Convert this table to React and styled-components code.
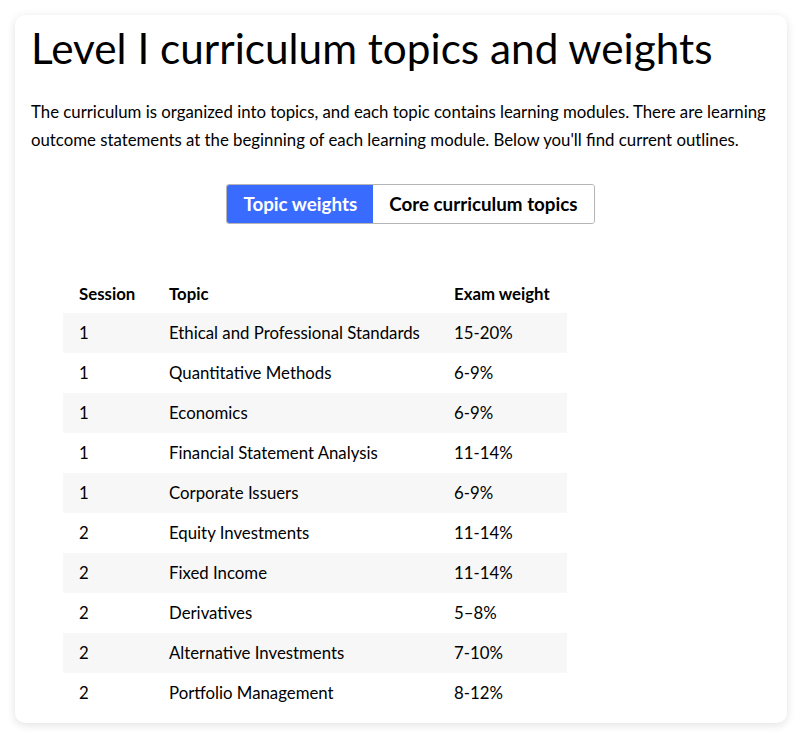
import React from "react";
import styled, { createGlobalStyle } from "styled-components";

const Global = createGlobalStyle`
  html, body { margin: 0; padding: 0; background: #ffffff; }
  body { font-family: Lato, "Noto Sans", sans-serif; color: #000; }
  * { box-sizing: border-box; }
`;

const Page = styled.div`
  padding: 15px;
`;

const Card = styled.section`
  background: #fff;
  border-radius: 10px;
  box-shadow: 0 2px 10px rgba(0, 0, 0, 0.12);
  padding: 8px 14px 10px 16px;
`;

const Title = styled.h1`
  margin: 0;
  font-size: 42.3px;
  font-weight: 400;
  line-height: 1.2;
`;

const Intro = styled.p`
  margin: 24px 0 0 0;
  font-size: 16.8px;
  line-height: 28px;
`;

const TabBar = styled.div`
  display: flex;
  justify-content: center;
  margin-top: 30px;
  padding-left: 17px;
`;

const TabGroup = styled.div`
  display: flex;
  border: 1px solid #b5b5b5;
  border-radius: 3px;
  overflow: hidden;
`;

const Tab = styled.button`
  border: none;
  margin: 0;
  height: 38px;
  padding: 0 16px;
  font-family: inherit;
  font-size: 18.8px;
  font-weight: 700;
  white-space: nowrap;
  background: ${(p) => (p.$active ? "#3a6bff" : "#fff")};
  color: ${(p) => (p.$active ? "#fff" : "#000")};
  cursor: pointer;
`;

const Table = styled.table`
  margin: 51px 0 0 32px;
  border-collapse: collapse;
  width: 504px;
  font-size: 16.8px;
`;

const Th = styled.th`
  text-align: left;
  font-weight: 700;
  height: 38px;
  padding: 0 16px;
  white-space: nowrap;
  width: ${(p) => p.$w}px;
`;

const Row = styled.tr`
  background: ${(p) => (p.$shaded ? "#f7f7f7" : "#fff")};
`;

const Td = styled.td`
  height: 40px;
  padding: 0 16px;
  white-space: nowrap;
`;

const rows = [
  ["1", "Ethical and Professional Standards", "15-20%"],
  ["1", "Quantitative Methods", "6-9%"],
  ["1", "Economics", "6-9%"],
  ["1", "Financial Statement Analysis", "11-14%"],
  ["1", "Corporate Issuers", "6-9%"],
  ["2", "Equity Investments", "11-14%"],
  ["2", "Fixed Income", "11-14%"],
  ["2", "Derivatives", "5–8%"],
  ["2", "Alternative Investments", "7-10%"],
  ["2", "Portfolio Management", "8-12%"],
];

export default function App() {
  return (
    <>
      <Global />
      <Page>
        <Card>
          <Title>Level I curriculum topics and weights</Title>
          <Intro>
            The curriculum is organized into topics, and each topic contains learning modules. There are learning
            outcome statements at the beginning of each learning module. Below you'll find current outlines.
          </Intro>
          <TabBar>
            <TabGroup>
              <Tab $active>Topic weights</Tab>
              <Tab>Core curriculum topics</Tab>
            </TabGroup>
          </TabBar>
          <Table>
            <thead>
              <tr>
                <Th $w={90}>Session</Th>
                <Th $w={285}>Topic</Th>
                <Th $w={129}>Exam weight</Th>
              </tr>
            </thead>
            <tbody>
              {rows.map((r, i) => (
                <Row key={i} $shaded={i % 2 === 0}>
                  <Td>{r[0]}</Td>
                  <Td>{r[1]}</Td>
                  <Td>{r[2]}</Td>
                </Row>
              ))}
            </tbody>
          </Table>
        </Card>
      </Page>
    </>
  );
}
